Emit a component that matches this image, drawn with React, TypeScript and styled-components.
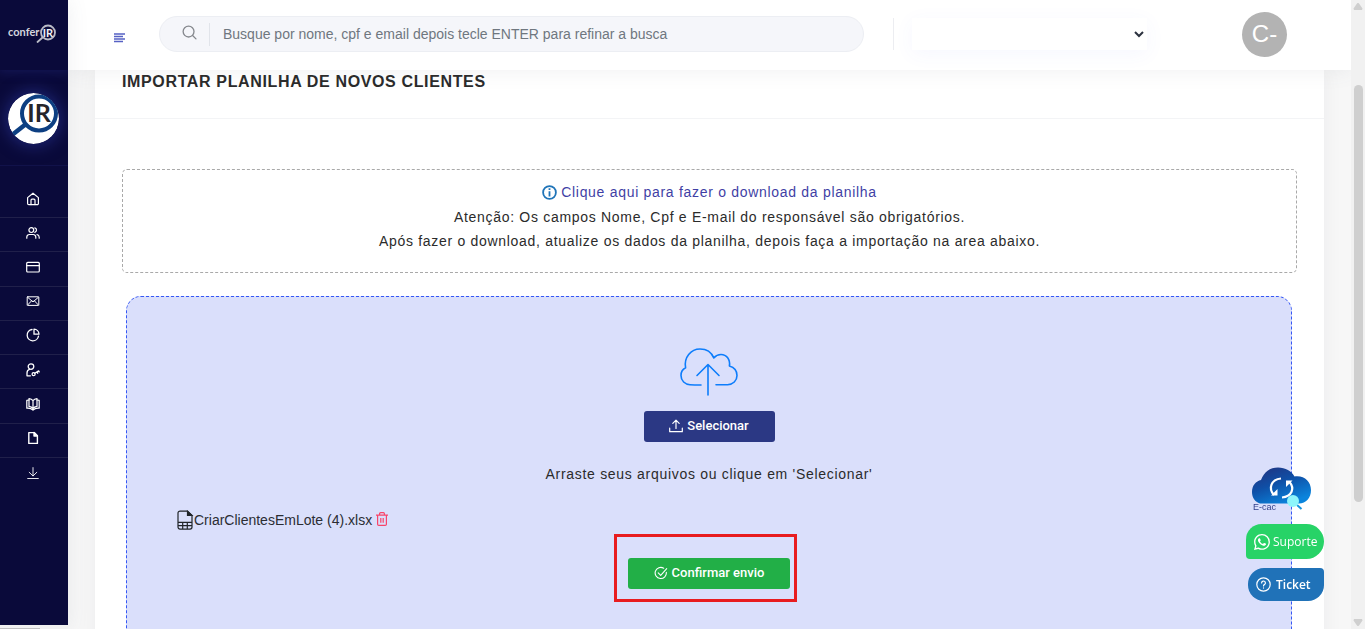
import React from "react";
import styled, { createGlobalStyle } from "styled-components";

const GlobalStyle = createGlobalStyle`
  * { box-sizing: border-box; }
  html, body { margin: 0; }
  body {
    background: #f7f7f7;
    color: #2b2d33;
    font: 14px/24px "Liberation Sans", Arial, sans-serif;
  }
  button, input, select { font: inherit; }
  h1, p, ul { margin: 0; padding: 0; }
  svg { display: block; flex: none; }
`;

const Shell = styled.div`
  display: grid;
  grid-template-columns: 68px minmax(0, 1fr) 14px;
  height: 100vh;
  overflow: hidden;
`;

/* ---------- sidebar ---------- */

const Sidebar = styled.aside`
  position: relative;
  z-index: 3;
  display: flex;
  flex-direction: column;
  overflow: hidden;
  background: #0a0a3a;
  box-shadow: 0 0 20px rgba(89, 102, 122, 0.1);
`;

const BrandLink = styled.a`
  display: flex;
  justify-content: center;
  height: 70px;
  padding: 22px 2px 0 0;
  box-shadow: 0 0 10px 2px rgba(40, 50, 140, 0.35);
`;

const Company = styled.div`
  display: flex;
  justify-content: center;
  height: 96px;
  padding: 23px 2px 0 0;
  border-bottom: 1px solid #11124a;
`;

const CompanyLogo = styled.div`
  width: 51px;
  height: 51px;
  border-radius: 50%;
  box-shadow: 0 0 16px 2px rgba(50, 65, 180, 0.5);
`;

const Nav = styled.ul`
  display: grid;
  grid-auto-rows: 1fr;
  height: 308px;
  margin-top: 18px;
  list-style: none;
`;

const NavItem = styled.li`
  border-bottom: 1px solid #20204a;
  &:last-child { border-bottom: 0; }
`;

const NavLink = styled.a`
  display: flex;
  align-items: center;
  justify-content: center;
  height: 100%;
  padding: 0 2px 4px 0;
  color: #fff;
`;

const SidebarScroll = styled.div`
  height: 4px;
  margin-top: auto;
  padding: 3px 28px 0 0;
  background: #f1f1f1;
`;

const SidebarThumb = styled.div`
  height: 1px;
  background: #c1c1c1;
`;

/* ---------- header ---------- */

const Main = styled.div`
  display: flex;
  flex-direction: column;
  min-width: 0;
  overflow: hidden;
`;

const Header = styled.header`
  position: relative;
  z-index: 2;
  display: flex;
  flex: none;
  align-items: center;
  height: 70px;
  padding: 0 64px 2px 46px;
  background: #fff;
  box-shadow: 0 0 20px rgba(89, 102, 122, 0.1);
`;

const IconButton = styled.button`
  display: flex;
  padding: 0;
  border: 0;
  background: none;
  color: inherit;
  cursor: pointer;
`;

const MenuButton = styled(IconButton)`
  margin: 8px 34px 0 0;
`;

const Search = styled.label`
  display: flex;
  flex: 1;
  align-items: center;
  height: 36px;
  padding-left: 22px;
  border: 1px solid #eceef3;
  border-radius: 18px;
  background: #f5f6fa;
`;

const SearchInput = styled.input`
  flex: 1;
  min-width: 0;
  height: 23px;
  margin-left: 11px;
  padding: 0 14px 0 13px;
  border: 0;
  border-left: 1px solid #e1e4ea;
  outline: 0;
  background: none;
  &::placeholder { color: #6f777f; opacity: 1; }
`;

const SearchIcon = styled.span`
  padding: 0 1px 4px 0;
  color: #85888d;
`;

const Divider = styled.span`
  width: 1px;
  height: 32px;
  margin: 0 18px 0 29px;
  background: #ecedf1;
`;

const CompanySelect = styled.select`
  width: 235px;
  height: 32px;
  border: 0;
  background: #fff;
  color: #2c323f;
  box-shadow: 0 4px 20px rgba(70, 102, 255, 0.05);
`;

const Avatar = styled.button`
  width: 45px;
  height: 45px;
  margin-left: 95px;
  padding: 0;
  border: 0;
  border-radius: 50%;
  background: #b3b3b3;
  color: #fff;
  font-size: 24px;
`;

/* ---------- content ---------- */

const Content = styled.main`
  flex: 1;
  min-height: 0;
  padding: 0 27px;
`;

const Card = styled.section`
  min-height: 100%;
  background: #fff;
  box-shadow: 0 0 20px rgba(8, 21, 66, 0.05);
`;

const CardHeader = styled.div`
  height: 49px;
  padding: 0 27px;
  border-bottom: 1px solid #f3f4f6;
`;

const Title = styled.h1`
  color: #2b2b2b;
  font-size: 16px;
  line-height: 24px;
  letter-spacing: 0.04em;
`;

const CardBody = styled.div`
  padding: 50px 27px 0;
`;

const Notice = styled.div`
  padding: 10px 0 19px;
  border: 1px dashed #a9a9a9;
  border-radius: 5px;
  text-align: center;
`;

const Text = styled.p`
  color: #2b2b2b;
  letter-spacing: 0.05em;
`;

const DownloadLink = styled.a`
  display: flex;
  align-items: center;
  justify-content: center;
  gap: 4px;
  padding-bottom: 1px;
  color: #3f3fa5;
  letter-spacing: 0.05em;
  text-decoration: none;
`;

const DropZone = styled.div`
  display: flex;
  flex-direction: column;
  align-items: center;
  min-height: 400px;
  margin: 23px 5px 0 4px;
  padding: 51px 50px;
  border: 1px dashed #3557f5;
  border-radius: 15px;
  background: #dadffb;
`;

const ActionButton = styled.button<{ $tone: string; $width: number }>`
  display: flex;
  align-items: center;
  justify-content: center;
  gap: 4px;
  width: ${(p) => p.$width}px;
  height: 31px;
  padding: 0 0 2px;
  border: 0;
  border-radius: 3px;
  background: ${(p) => p.$tone};
  color: #fff;
  font: 500 13px/20px Roboto, sans-serif;
  cursor: pointer;
`;

const CloudArea = styled.div`
  padding-bottom: 15px;
`;

const Hint = styled(Text)`
  margin-top: 20px;
`;

const FileRow = styled.div`
  display: flex;
  align-items: center;
  align-self: stretch;
  height: 24px;
  margin: 22px 0 26px;
`;

const DeleteButton = styled(IconButton)`
  margin-left: 4px;
  padding-bottom: 3px;
`;

const Highlighted = styled.div`
  position: relative;
`;

const Frame = styled.span`
  position: absolute;
  inset: -24px -7px -13px -14px;
  border: 3px solid #e81c1f;
  pointer-events: none;
`;

/* ---------- floating shortcuts ---------- */

const Shortcuts = styled.div`
  position: fixed;
  z-index: 4;
  right: 41px;
  bottom: 28px;
  display: flex;
  flex-direction: column;
  align-items: flex-end;
  gap: 9px;
  font-family: "Open Sans", sans-serif;
`;

const Ecac = styled.a`
  width: 72px;
  padding-bottom: 3px;
  color: #33418c;
  font: 9px/10px "Liberation Sans", Arial, sans-serif;
  text-decoration: none;
`;

const EcacLabel = styled.span`
  display: block;
  margin-top: -8px;
  padding-left: 1px;
`;

const Pill = styled.a<{ $tone: string; $radius: string; $strong?: boolean }>`
  display: flex;
  align-items: center;
  gap: ${(p) => (p.$strong ? 5 : 3)}px;
  width: ${(p) => (p.$strong ? 76 : 78)}px;
  height: ${(p) => (p.$strong ? 33 : 35)}px;
  padding-left: 8px;
  border-radius: ${(p) => p.$radius};
  background: ${(p) => p.$tone};
  color: #fff;
  font-size: 12px;
  font-weight: ${(p) => (p.$strong ? 600 : 400)};
  text-decoration: none;
`;

/* ---------- page scrollbar ---------- */

const Scrollbar = styled.div`
  display: flex;
  flex-direction: column;
  align-items: center;
  padding: 3px 0;
  background: #f1f1f1;
`;

const Thumb = styled.div`
  width: 9px;
  height: 67%;
  margin: 75px 0 auto;
  border-radius: 5px;
  background: #cfcfcf;
`;

/* ---------- icons ---------- */

const Line = ({ children, size = 14, box = 14, w = 1.1 }: { children: React.ReactNode; size?: number; box?: number; w?: number }) => (
  <svg width={size} height={size} viewBox={`0 0 ${box} ${box}`} fill="none" stroke="currentColor" strokeWidth={w} strokeLinejoin="round" strokeLinecap="round" aria-hidden="true">
    {children}
  </svg>
);

const navItems: { label: string; icon: React.ReactNode }[] = [
  { label: "Início", icon: <Line w={1.2}><path d="M1.6 5.6 7 1.2l5.4 4.4v5.9a1.2 1.2 0 0 1-1.2 1.2H2.8a1.2 1.2 0 0 1-1.2-1.2z" /><path d="M5 12.6V8.2a1 1 0 0 1 1-1h2a1 1 0 0 1 1 1v4.4" /></Line> },
  { label: "Clientes", icon: <Line w={1.2}><circle cx="5.3" cy="4.1" r="2.4" /><path d="M.8 12.2v-1.1a2.6 2.6 0 0 1 2.6-2.6h3.8a2.6 2.6 0 0 1 2.6 2.6v1.1M8.8 1.8a2.4 2.4 0 0 1 0 4.6M11 8.7a2.6 2.6 0 0 1 2.2 2.5v1" /></Line> },
  { label: "Pagamentos", icon: <Line w={1.2}><rect x=".7" y="2.4" width="12.6" height="9.6" rx="1" /><path d="M.7 5.6h12.6" /></Line> },
  { label: "Mensagens", icon: <Line w={1}><rect x="1.2" y="2.8" width="11.6" height="8.6" rx=".6" /><path d="m1.6 3.3 5.4 4.6 5.4-4.6M1.6 11l4-4.2M12.4 11l-4-4.2" /></Line> },
  { label: "Relatórios", icon: <Line w={1.3}><path d="M6 1.5a5.7 5.7 0 1 0 6.5 6.6" /><path d="M8 1.2v5h5A5.2 5.2 0 0 0 8 1.2z" /></Line> },
  { label: "Acessos", icon: <Line w={1.3}><circle cx="5" cy="3.6" r="2.8" /><path d="M3.4 6.4C1.8 7 1 8.3 1 10v2.8h3.4" /><circle cx="7.6" cy="11.2" r="1.5" /><path d="m8.8 10.2 3.8-2.3M11 9l.7 1.2M12.6 7.9l.6 1" /></Line> },
  { label: "Guias", icon: <Line w={1.2}><path d="M7 3.6v8M7 3.6C6 2.4 4.6 1.800 3 1.600v7.800c1.600.2 3 .8 4 2.200 1-1.400 2.400-2 4-2.200V1.600c-1.600.2-3 .8-4 2" /><path d="M3 3 .8 3.400v7.800c2.400-.2 4.600.3 6.200 1.800 1.600-1.500 3.800-2 6.200-1.800V3.400L11 3" /></Line> },
  { label: "Documentos", icon: <Line w={1.4}><path d="M2.800 1.600h5.400l3.200 3.200v7.600H2.800z" /><path d="M8 1.600v3.400h3.400z" fill="currentColor" /></Line> },
  { label: "Downloads", icon: <Line w={0.9}><path d="M7 1.600v8.200M3.200 6.300 7 10l3.800-3.700M1.700 12.500h10.600" /></Line> },
];

const BrandLogo = () => (
  <svg width="50" height="24" viewBox="0 0 50 24" role="img" aria-label="conferIR">
    <text x="0" y="14" fill="#d4d5de" fontFamily="Lato, sans-serif" fontSize="11" fontWeight="700">confer</text>
    <circle cx="40" cy="10.500" r="7" fill="none" stroke="#b9bbc6" strokeWidth="1.800" />
    <path d="m34.500 15.500-5 4.500" stroke="#b9bbc6" strokeWidth="1.800" strokeLinecap="round" />
    <text x="40" y="14.500" fill="#f2f2f6" fontFamily="Lato, sans-serif" fontSize="11" fontWeight="700" textAnchor="middle">IR</text>
  </svg>
);

const CompanyMark = () => (
  <svg width="51" height="51" viewBox="0 0 51 51" role="img" aria-label="IR">
    <defs><clipPath id="mark"><circle cx="25.500" cy="25.500" r="25.500" /></clipPath></defs>
    <g clipPath="url(#mark)">
      <circle cx="25.500" cy="25.500" r="25.500" fill="#fff" />
      <circle cx="31" cy="20.500" r="17" fill="#fff" stroke="#0d3f82" strokeWidth="4" />
      <path d="M18 31 4 42" stroke="#0d3f82" strokeWidth="4.500" />
      <text x="31" y="29" fill="#25252b" fontFamily="Lato, sans-serif" fontSize="25" fontWeight="700" textAnchor="middle">IR</text>
    </g>
  </svg>
);

const CloudUpload = () => (
  <svg width="58" height="48" viewBox="0 0 58 48" fill="none" stroke="#0d7dfb" strokeWidth="1.600" strokeLinecap="round" strokeLinejoin="round" aria-hidden="true">
    <path d="M21 37c-3 0-7 0-11-.300C5 36.300 1 33 1 27.500c0-3.600 1.600-6.300 4.600-7.700C3.600 9.500 11 1 20 1c6.500 0 11.500 3.400 13.800 8.900 2-2.300 4.500-3.400 7.200-3.400 5.500 0 9.500 5 8.400 11.500 4.500 1.300 7.600 5 7.600 9.500 0 5.300-4 9-9.500 9.300H36" />
    <path d="M28 47V16.500M17 27.500l11-11 11 11" />
  </svg>
);

const EcacCloud = () => (
  <svg width="60" height="43" viewBox="0 0 60 43" aria-hidden="true">
    <defs>
      <linearGradient id="ecac" x1="0" y1="0" x2=".6" y2="1">
        <stop offset="0" stopColor="#23307c" /><stop offset=".5" stopColor="#0f4fa6" /><stop offset="1" stopColor="#0a84dc" />
      </linearGradient>
    </defs>
    <path d="M8 36.500C3 35 0 30.500 0 25c0-6.500 4-11 9-12C12 5 18 .500 26 .500c7.500 0 13.500 3.500 16.500 9C52 8 59 14.500 59 23c0 8-5 13.500-12 13.500z" fill="url(#ecac)" />
    <g fill="none" stroke="#fff" strokeWidth="2.200">
      <path d="M29 11.500c-10 1-13 10-7 16.500M30 30.500c10-1 13-9 7.500-15.500" />
    </g>
    <path d="M19 28.500h6.500v-6.500zM34 13.500h6.500l-6.500 6.500z" fill="#fff" />
    <path d="m45 38 4.500 4" stroke="#1593dd" strokeWidth="2" />
    <circle cx="41" cy="34" r="6" fill="#8df5fb" />
  </svg>
);

const WhatsApp = () => (
  <svg width="16" height="16" viewBox="0 0 16 16" fill="currentColor" aria-hidden="true">
    <path d="M13.601 2.326A7.850 7.850 0 0 0 7.994 0C3.627 0 .068 3.558.064 7.926c0 1.399.366 2.760 1.057 3.965L0 16l4.204-1.102a7.900 7.900 0 0 0 3.790.965h.004c4.368 0 7.926-3.558 7.930-7.930A7.900 7.900 0 0 0 13.600 2.326zM7.994 14.521a6.600 6.600 0 0 1-3.356-.920l-.240-.144-2.494.654.666-2.433-.156-.251a6.560 6.560 0 0 1-1.007-3.505c0-3.626 2.957-6.584 6.591-6.584a6.560 6.560 0 0 1 4.660 1.931 6.560 6.560 0 0 1 1.928 4.660c-.004 3.639-2.961 6.592-6.592 6.592m3.615-4.934c-.197-.099-1.170-.578-1.353-.646-.182-.065-.315-.099-.445.099-.133.197-.513.646-.627.775-.114.133-.232.148-.430.050-.197-.100-.836-.308-1.592-.985-.590-.525-.985-1.175-1.103-1.372-.114-.198-.011-.304.088-.403.087-.088.197-.232.296-.346.100-.114.133-.198.198-.330.065-.134.034-.248-.015-.347-.050-.099-.445-1.076-.612-1.470-.160-.389-.323-.335-.445-.340-.114-.007-.247-.007-.380-.007a.730.730 0 0 0-.529.247c-.182.198-.691.677-.691 1.654s.710 1.916.810 2.049c.098.133 1.394 2.132 3.383 2.992.470.205.840.326 1.129.418.475.152.904.129 1.246.080.380-.058 1.171-.480 1.338-.943.164-.464.164-.860.114-.943-.049-.084-.182-.133-.380-.232" />
  </svg>
);

export default function App() {
  return (
    <>
      <GlobalStyle />
      <Shell>
        <Sidebar>
          <BrandLink href="#inicio"><BrandLogo /></BrandLink>
          <Company><CompanyLogo><CompanyMark /></CompanyLogo></Company>
          <Nav>
            {navItems.map((item) => (
              <NavItem key={item.label}>
                <NavLink href="#" aria-label={item.label}>{item.icon}</NavLink>
              </NavItem>
            ))}
          </Nav>
          <SidebarScroll><SidebarThumb /></SidebarScroll>
        </Sidebar>

        <Main>
          <Header>
            <MenuButton type="button" aria-label="Menu">
              <svg width="11" height="10" viewBox="0 0 11 10" stroke="#5661c4" strokeWidth="1.500" aria-hidden="true">
                <path d="M0 1h11M0 3.500h9M0 6h11M0 8.500h9" />
              </svg>
            </MenuButton>
            <Search>
              <SearchIcon>
                <Line size={15} box={16} w={1.4}><circle cx="7" cy="7" r="5.800" /><path d="m11.300 11.300 3.600 3.500" /></Line>
              </SearchIcon>
              <SearchInput type="search" aria-label="Buscar" placeholder="Busque por nome, cpf e email depois tecle ENTER para refinar a busca" />
            </Search>
            <Divider />
            <CompanySelect aria-label="Empresa" defaultValue=""><option value="" /></CompanySelect>
            <Avatar type="button">C-</Avatar>
          </Header>

          <Content>
            <Card>
              <CardHeader><Title>IMPORTAR PLANILHA DE NOVOS CLIENTES</Title></CardHeader>
              <CardBody>
                <Notice>
                  <DownloadLink href="#planilha">
                    <svg width="15" height="15" viewBox="0 0 15 15" fill="none" stroke="#1f74b8" strokeWidth="1.800" aria-hidden="true">
                      <circle cx="7.500" cy="7.500" r="6.400" /><path d="M7.500 6.200v5.300M7.500 3.300v1.800" />
                    </svg>
                    Clique aqui para fazer o download da planilha
                  </DownloadLink>
                  <Text>Atenção: Os campos Nome, Cpf e E-mail do responsável são obrigatórios.</Text>
                  <Text>Após fazer o download, atualize os dados da planilha, depois faça a importação na area abaixo.</Text>
                </Notice>

                <DropZone>
                  <CloudArea><CloudUpload /></CloudArea>
                  <ActionButton type="button" $tone="#2b3884" $width={131}>
                    <Line w={1.2}><path d="M7 9.500V1.300M3.800 4.300 7 1.100l3.200 3.200M.7 9.200v3.500h12.600V9.200" /></Line>
                    Selecionar
                  </ActionButton>
                  <Hint>Arraste seus arquivos ou clique em 'Selecionar'</Hint>
                  <FileRow>
                    <svg width="17" height="20" viewBox="0 0 17 20" fill="none" stroke="#212529" strokeWidth="1.200" aria-hidden="true">
                      <path d="M3 1.100h7.500l4.500 4.400v11.600a2 2 0 0 1-2 2H3a2 2 0 0 1-2-2v-14a2 2 0 0 1 2-2zM1 12.300h14M1 15.600h14M5.700 12.300v6.800M10.300 12.300v6.800" />
                      <path d="M10.500 1.300v4.200H15z" fill="#212529" />
                    </svg>
                    <span>CriarClientesEmLote (4).xlsx</span>
                    <DeleteButton type="button" aria-label="Excluir arquivo">
                      <svg width="12" height="14" viewBox="0 0 12 14" fill="none" stroke="#f8446a" strokeWidth="1.200" aria-hidden="true">
                        <path d="M0 3.200h12M3.600 3V1.700A1 1 0 0 1 4.600.700h2.800a1 1 0 0 1 1 1V3M1.600 3.200v9a1.200 1.200 0 0 0 1.200 1.200h6.400a1.200 1.200 0 0 0 1.200-1.200v-9M4.800 6v4.800M7.200 6v4.800" />
                      </svg>
                    </DeleteButton>
                  </FileRow>
                  <Highlighted>
                    <ActionButton type="button" $tone="#22af47" $width={162}>
                      <Line w={1.1}><path d="M12.300 6.200a5.600 5.600 0 1 1-2.600-4" /><path d="m4.200 6.800 2.500 2.500 6-6.600" /></Line>
                      Confirmar envio
                    </ActionButton>
                    <Frame />
                  </Highlighted>
                </DropZone>
              </CardBody>
            </Card>
          </Content>
        </Main>

        <Scrollbar aria-hidden="true">
          <svg width="10" height="7" viewBox="0 0 10 7" fill="#cfcfcf"><path d="M4 .600a1.200 1.200 0 0 1 2 0L9.500 5.500 9 7H1L.500 5.500z" /></svg>
          <Thumb />
          <svg width="10" height="7" viewBox="0 0 10 7" fill="#cfcfcf"><path d="M4 6.400a1.200 1.200 0 0 0 2 0L9.500 1.500 9 0H1L.500 1.500z" /></svg>
        </Scrollbar>
      </Shell>

      <Shortcuts>
        <Ecac href="#ecac"><EcacCloud /><EcacLabel>E-cac</EcacLabel></Ecac>
        <Pill href="#suporte" $tone="#27d367" $radius="16px 18px 18px 4px"><WhatsApp />Suporte</Pill>
        <Pill href="#ticket" $tone="#2072b8" $radius="16px 4px 16px 16px" $strong>
          <Line size={15} box={15} w={1.2}><circle cx="7.500" cy="7.500" r="6.700" /><path d="M5.600 6a1.900 1.900 0 1 1 2.800 1.600c-.6.400-.9.700-.9 1.300M7.500 10.900v.200" /></Line>
          Ticket
        </Pill>
      </Shortcuts>
    </>
  );
}
